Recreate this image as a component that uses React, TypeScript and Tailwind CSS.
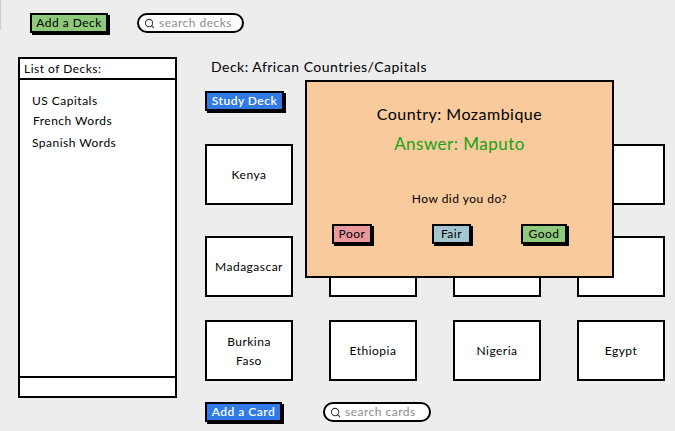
import React from "react";
import { Search } from "lucide-react";

// Sketchy button with the hard black drop shadow
const SketchButton = ({
  label,
  className,
}: {
  label: string;
  className: string;
}) => (
  <div
    className={`flex items-center justify-center h-[20px] border-2 border-black shadow-[2px_2px_0_#000] text-[12px] leading-none ${className}`}
  >
    {label}
  </div>
);

const SearchBox = ({ placeholder, className }: { placeholder: string; className: string }) => (
  <div
    className={`flex items-center h-[20px] rounded-full border-2 border-black bg-white pl-[5px] gap-[4px] ${className}`}
  >
    <Search size={11} strokeWidth={2.2} className="text-[#333]" />
    <span className="text-[12px] leading-none text-[#8c8c8c]">{placeholder}</span>
  </div>
);

const Card = ({ children }: { children?: React.ReactNode }) => (
  <div className="w-[88px] h-[61px] shrink-0 flex flex-col items-center justify-center border-2 border-black bg-white text-[12px] leading-[19px] text-center">
    {children}
  </div>
);

const decks = ["US Capitals", "French Words", "Spanish Words"];

export default function App() {
  return (
    <div className="relative w-[675px] h-[431px] overflow-hidden bg-[#ededed] text-black tracking-[0.03em] font-['Lato',sans-serif]">
      <div className="absolute left-0 top-0 w-px h-[30px] bg-[#cfcfcf]" />

      {/* top toolbar */}
      <div className="flex items-center mt-[13px] ml-[30px] h-[20px]">
        <SketchButton label="Add a Deck" className="w-[78px] bg-[#8fc97b]" />
        <SearchBox placeholder="search decks" className="ml-[29px] w-[107px]" />
      </div>

      <div className="flex mt-[24px] ml-[18px]">
        {/* deck list */}
        <div className="flex flex-col w-[159px] h-[341px] border-2 border-black bg-white">
          <div className="h-[21px] border-b-2 border-black pl-[4px] text-[12px] leading-[19px]">
            List of Decks:
          </div>
          <div className="flex-1 pl-[12px] pt-[12px] text-[12px]">
            <div className="leading-[18px]">{decks[0]}</div>
            <div className="leading-[18px] mt-[2px] ml-[1px]">{decks[1]}</div>
            <div className="leading-[18px] mt-[4px]">{decks[2]}</div>
          </div>
          <div className="h-[20px] border-t-2 border-black" />
        </div>

        {/* deck area */}
        <div className="relative ml-[28px] w-[470px]">
          <div className="ml-[6px] text-[14px] leading-[20px]">Deck: African Countries/Capitals</div>
          <SketchButton
            label="Study Deck"
            className="mt-[14px] w-[79px] bg-[#2f7ae5] text-white font-semibold"
          />

          <div className="flex gap-[36px] mt-[33px]">
            <Card>Kenya</Card>
            <Card />
            <Card />
            <Card />
          </div>
          <div className="flex gap-[36px] mt-[31px]">
            <Card>Madagascar</Card>
            <Card />
            <Card />
            <Card />
          </div>
          <div className="flex gap-[36px] mt-[23px]">
            <Card>
              <span>Burkina</span>
              <span>Faso</span>
            </Card>
            <Card>Ethiopia</Card>
            <Card>Nigeria</Card>
            <Card>Egypt</Card>
          </div>

          <div className="flex items-center mt-[21px] h-[20px]">
            <SketchButton label="Add a Card" className="w-[77px] bg-[#2f7ae5] text-white font-semibold" />
            <SearchBox placeholder="search cards" className="ml-[41px] w-[108px]" />
          </div>

          {/* study popup */}
          <div className="absolute left-[100px] top-[23px] w-[309px] h-[198px] border-2 border-black bg-[#f8ca9c] flex flex-col items-center">
            <div className="mt-[22px] text-[16px] leading-[20px]">Country: Mozambique</div>
            <div className="mt-[10px] text-[17px] leading-[20px] text-[#16a318]">Answer: Maputo</div>
            <div className="mt-[36px] text-[12px] leading-[18px]">How did you do?</div>
            <div className="flex self-start mt-[16px] ml-[25px]">
              <SketchButton label="Poor" className="w-[40px] bg-[#e9989b]" />
              <SketchButton label="Fair" className="ml-[60px] w-[39px] bg-[#a4c6d1]" />
              <SketchButton label="Good" className="ml-[50px] w-[46px] bg-[#8fc97b]" />
            </div>
          </div>
        </div>
      </div>
    </div>
  );
}
